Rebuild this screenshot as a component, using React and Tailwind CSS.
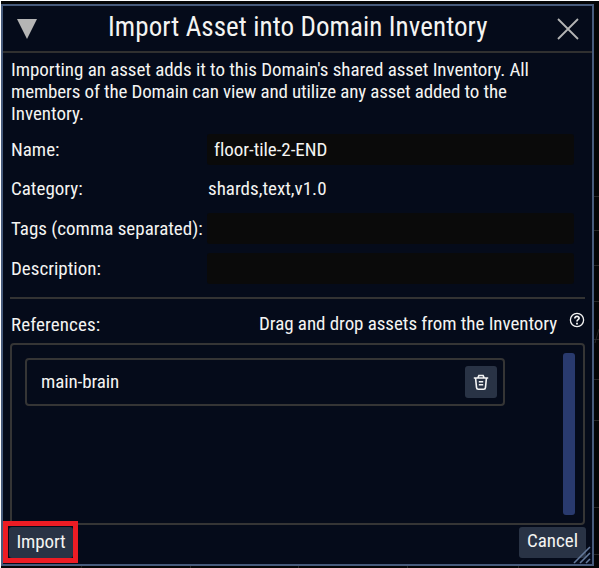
const condensed = "font-['Roboto_Condensed','Roboto',sans-serif] font-stretch-75% font-[450]";

function Field({ label, value }) {
  return (
    <div className="flex h-[31px] items-center">
      <label className="w-[196px] shrink-0 whitespace-nowrap">{label}</label>
      <div className="flex h-[31px] w-[367px] items-center rounded-[3px] bg-[#0a0a0a] pl-[7px]">{value}</div>
    </div>
  );
}

function TrashIcon() {
  return (
    <svg width="16" height="17" viewBox="0 0 16 17" fill="none" stroke="#f4f4f4" strokeWidth="1.6">
      <path d="M.8 4h14.4M5 3.6 5.9 1.5h4.2l.9 2.1M2.6 4.2l.9 9.2q.1 1.8 1.8 1.8h5.4q1.7 0 1.8-1.8l.9-9.2M5.8 7.8h4.4M5.8 10.8h4.4" />
    </svg>
  );
}

function HelpIcon() {
  return (
    <svg width="16" height="16" viewBox="0 0 16 16" fill="none" stroke="#f4f4f4" strokeWidth="1.3">
      <circle cx="8" cy="8" r="6.6" />
      <path d="M5.8 6.5c0-3 4.5-2.7 4.3-.2C10 7.7 8 7.8 8 9.5" strokeWidth="1.7" />
      <path d="M8 10.7v1.7" strokeWidth="1.8" />
    </svg>
  );
}

export default function App() {
  return (
    <div className={`relative h-[568px] w-[599px] overflow-hidden border-l border-t border-white bg-[#040506] text-[19px] leading-[22px] text-[#f4f4f2] ${condensed}`}>
      <svg className="absolute left-0 top-0" width="598" height="567" stroke="#262626" fill="none">
        <path d="M592 195.5h6M592 229.5h6M592 264.5h6M592 300.5h6M592 338.5h6M592 378.5h6M592 419.5h6M592 506.5h6M592 553.5h6M594 342l4-14M80 567l2-5M189.5 563v4M297.5 563v4M406.5 563v4M517.5 563v4" />
      </svg>
      <main className="relative mt-[3px] flex h-[562px] w-[593px] flex-col border-2 border-[#475b7c] bg-[#050b1a]">
        <header className="flex h-[47px] shrink-0 items-center border-b-2 border-[#303030]">
          <svg className="ml-[14px] shrink-0" width="20" height="20" viewBox="0 0 20 20"><path d="M0 0h20L10 20z" fill="#b5b5b5" /></svg>
          <h1 className="ml-[71px] w-[449px] whitespace-nowrap pb-[3px] text-[27px] leading-[36px] tracking-[0.09px]">Import Asset into Domain Inventory</h1>
          <svg className="shrink-0" width="22" height="22" viewBox="0 0 22 22" stroke="#b5b5b5" strokeWidth="1.8"><path d="m1 1 20 20M21 1 1 21" /></svg>
        </header>
        <p className="ml-2 mt-[6px] h-[66px] shrink-0 whitespace-nowrap">
          <span className="tracking-[-0.05px]">Importing an asset adds it to this Domain's shared asset Inventory. All</span><br />
          <span className="tracking-[-0.14px]">members of the Domain can view and utilize any asset added to the</span><br />
          Inventory.
        </p>
        <section className="ml-2 mt-[9px] flex flex-col gap-[9px]">
          <Field label="Name:" value={<span className="tracking-[-0.05px]">floor-tile-2-END</span>} />
          <div className="flex h-[30px] items-center"><span className="w-[197px]">Category:</span><span>shards,text,v1.0</span></div>
          <Field label="Tags (comma separated):" />
          <Field label="Description:" />
        </section>
        <hr className="ml-[7px] mt-[13px] w-[575px] border-t-2 border-[#333]" />
        <div className="ml-2 flex h-[44px] w-[574px] shrink-0 items-center pt-[8px]">
          <span className="tracking-[0.1px]">References:</span>
          <span className="ml-auto mr-[12px] pb-[2px] tracking-[-0.06px]">Drag and drop assets from the Inventory</span>
          <span className="pb-[10px]"><HelpIcon /></span>
        </div>
        <section className="ml-[7px] flex h-[182px] w-[575px] shrink-0 justify-between rounded-[4px] border-2 border-[#353535] pl-[13px] pr-2 pt-[8px]">
          <div className="mt-[5px] flex h-[48px] w-[480px] items-center justify-between rounded-[4px] border-2 border-[#353535] pl-[14px] pr-[6px]">
            <span className="tracking-[-0.1px]">main-brain</span>
            <button className="flex h-8 w-8 items-center justify-center rounded-[3px] bg-[#293345]"><TrashIcon /></button>
          </div>
          <div className="h-[162px] w-3 rounded-[3px] bg-[#293a6e]" />
        </section>
        <footer className="flex h-[38px] shrink-0 justify-between pl-[6px] pr-[6px] pt-[2px]">
          <button className="flex h-[31px] w-[64px] items-center justify-center rounded-[3px] bg-[#293345] pb-[2px] tracking-[-0.15px]">Import</button>
          <button className="flex h-[31px] w-[67px] items-center justify-center rounded-[3px] bg-[#293345] pb-[3px]">Cancel</button>
        </footer>
      </main>
      <div className="absolute left-[2px] top-[520px] h-[42px] w-[75px] border-5 border-[#ed1c24]" />
      <svg className="absolute left-[572px] top-[545px]" width="19" height="18" viewBox="0 0 19 18" stroke="#64799b" strokeWidth="1.6"><path d="M1 17 17 1M7 17 17 7M13 17l4-4" /></svg>
    </div>
  );
}
